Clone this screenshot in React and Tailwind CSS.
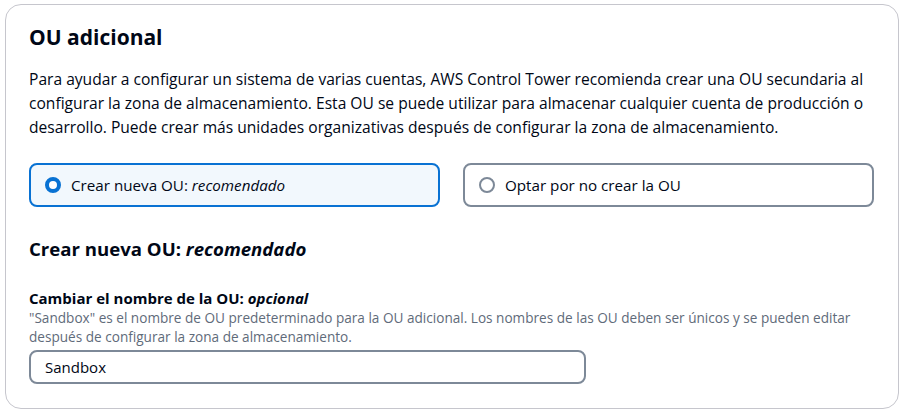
import React, { useState } from 'react';

const options = [
  { value: 'create', label: 'Crear nueva OU:', hint: 'recomendado' },
  { value: 'skip', label: 'Optar por no crear la OU' },
];

function RadioTile({ option, checked, onSelect }) {
  return (
    <div
      className={`flex-1 h-[44px] flex items-center gap-[10px] px-[14px] rounded-[8px] border-2 cursor-pointer ${
        checked ? 'border-[#0972d3] bg-[#f2f8fd]' : 'border-[#7d8998] bg-white'
      }`}
      onClick={() => onSelect(option.value)}
    >
      {/* radio */}
      {checked ? (
        <span className="w-[16px] h-[16px] rounded-full border-[4px] border-[#0972d3] bg-white shrink-0" />
      ) : (
        <span className="w-[16px] h-[16px] rounded-full border-2 border-[#7d8998] bg-white shrink-0" />
      )}
      <span className="text-[15.2px] text-[#000716]">
        {option.label}
        {option.hint && <i> {option.hint}</i>}
      </span>
    </div>
  );
}

const App = () => {
  const [selected, setSelected] = useState('create');
  const [name, setName] = useState('Sandbox');

  return (
    <div className="w-[904px] h-[414px] bg-white pt-[4px] pl-[5px] pr-[5px] pb-[5px] font-['Open_Sans','Liberation_Sans',sans-serif] text-[#000716]">
      <div className="h-full rounded-[16px] border border-[#c6c6cd] px-[23px] pt-[19px]">
        {/* 見出し */}
        <h2 className="text-[21px] font-bold leading-[26px]">OU adicional</h2>

        {/* 説明 */}
        <p className="mt-[17px] text-[15.6px] leading-[24px]">
          Para ayudar a configurar un sistema de varias cuentas, AWS Control Tower recomienda crear una OU secundaria al
          configurar la zona de almacenamiento. Esta OU se puede utilizar para almacenar cualquier cuenta de producción o
          desarrollo. Puede crear más unidades organizativas después de configurar la zona de almacenamiento.
        </p>

        {/* ラジオ */}
        <div className="mt-[24px] flex gap-[23px] pr-[1px]">
          {options.map((option) => (
            <RadioTile key={option.value} option={option} checked={selected === option.value} onSelect={setSelected} />
          ))}
        </div>

        <h3 className="mt-[30px] text-[18.6px] font-bold leading-[24px]">
          Crear nueva OU: <i>recomendado</i>
        </h3>

        {/* フォーム */}
        <div className="mt-[27px]">
          <label className="block text-[15px] font-bold leading-[20px]">
            Cambiar el nombre de la OU: <i>opcional</i>
          </label>
          <p className="text-[13.6px] leading-[19px] text-[#5f6b7a]">
            "Sandbox" es el nombre de OU predeterminado para la OU adicional. Los nombres de las OU deben ser únicos y se pueden editar
            <br />
            después de configurar la zona de almacenamiento.
          </p>
          <input
            className="mt-[4px] block w-[557px] h-[34px] rounded-[8px] border-2 border-[#7d8998] px-[14px] text-[15px] text-[#000716] outline-none"
            value={name}
            onChange={(e) => setName(e.target.value)}
          />
        </div>
      </div>
    </div>
  );
};

export default App;
